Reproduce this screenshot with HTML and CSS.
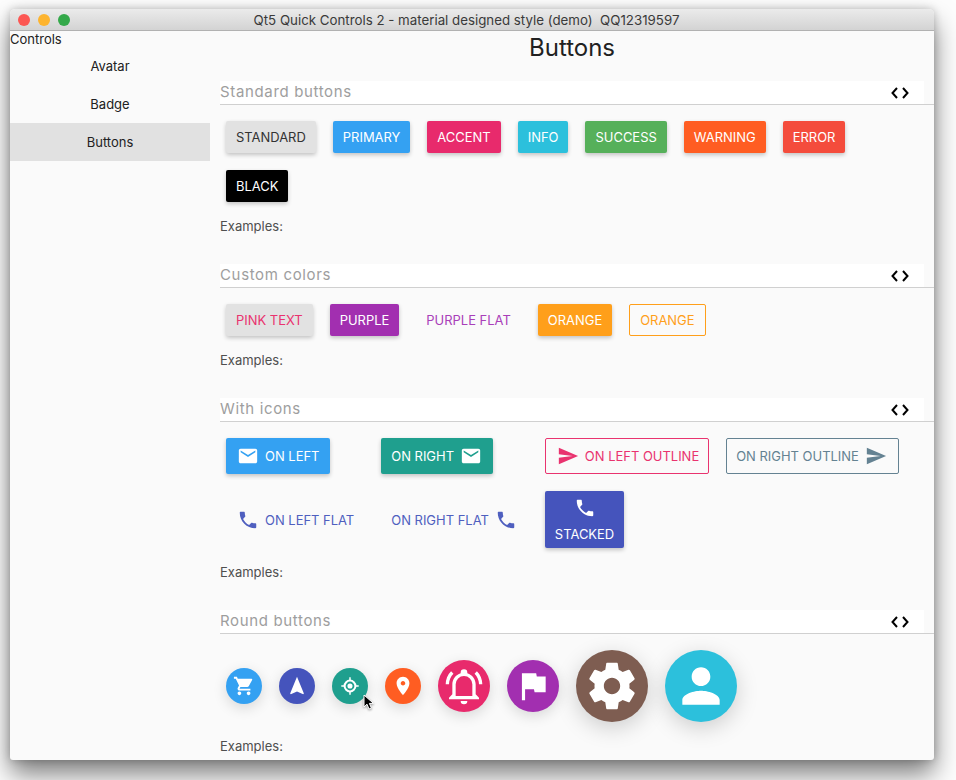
FILE: index.html
```html
<!DOCTYPE html>
<html lang="en">
<head>
    <meta charset="UTF-8">
    <meta name="viewport" content="width=device-width, initial-scale=1.0">
    <title>Qt5 Quick Controls 2 - material designed style (demo)</title>
    <link rel="stylesheet" href="styles.css">
</head>
<body>
    <svg class="icon-defs" width="0" height="0" aria-hidden="true">
        <symbol id="i-email" viewBox="0 0 24 24"><path d="M20 4H4c-1.1 0-1.99.9-1.99 2L2 18c0 1.1.9 2 2 2h16c1.1 0 2-.9 2-2V6c0-1.1-.9-2-2-2zm0 4l-8 5-8-5V6l8 5 8-5v2z"/></symbol>
        <symbol id="i-send" viewBox="0 0 24 24"><path d="M2.01 21L23 12 2.01 3 2 10l15 2-15 2z"/></symbol>
        <symbol id="i-phone" viewBox="0 0 24 24"><path d="M6.62 10.79c1.44 2.83 3.76 5.14 6.59 6.59l2.2-2.2c.27-.27.67-.36 1.02-.24 1.12.37 2.33.57 3.57.57.55 0 1 .45 1 1V20c0 .55-.45 1-1 1-9.39 0-17-7.61-17-17 0-.55.45-1 1-1h3.5c.55 0 1 .45 1 1 0 1.25.2 2.45.57 3.57.11.35.03.74-.25 1.02l-2.2 2.2z"/></symbol>
        <symbol id="i-cart" viewBox="0 0 24 24"><path d="M7 18c-1.1 0-1.99.9-1.99 2S5.9 22 7 22s2-.9 2-2-.9-2-2-2zM1 2v2h2l3.6 7.59-1.35 2.45c-.16.28-.25.61-.25.96 0 1.1.9 2 2 2h12v-2H7.42c-.14 0-.25-.11-.25-.25l.03-.12.9-1.63h7.45c.75 0 1.41-.41 1.75-1.03l3.58-6.49c.08-.14.12-.31.12-.48 0-.55-.45-1-1-1H5.21l-.94-2H1zm16 16c-1.1 0-1.99.9-1.99 2s.89 2 1.99 2 2-.9 2-2-.9-2-2-2z"/></symbol>
        <symbol id="i-navigation" viewBox="0 0 24 24"><path d="M12 2L4.5 20.29l.71.71L12 18l6.79 3 .71-.71z"/></symbol>
        <symbol id="i-location" viewBox="0 0 24 24"><path fill-rule="evenodd" d="M12 5a7 7 0 1 0 0 14 7 7 0 0 0 0-14zm0 2.200a4.800 4.800 0 1 1 0 9.600 4.800 4.800 0 0 1 0-9.600z"/><circle cx="12" cy="12" r="2.800"/><path d="M11.200 2.500h1.600v3h-1.600zM11.200 18.500h1.600v3h-1.600zM2.500 11.200h3v1.600h-3zM18.500 11.200h3v1.600h-3z"/></symbol>
        <symbol id="i-place" viewBox="0 0 24 24"><path d="M12 2C8.13 2 5 5.13 5 9c0 5.25 7 13 7 13s7-7.75 7-13c0-3.87-3.13-7-7-7zm0 9.5c-1.38 0-2.5-1.12-2.5-2.5s1.12-2.5 2.5-2.5 2.5 1.12 2.5 2.5-1.12 2.5-2.5 2.5z"/></symbol>
        <symbol id="i-bell" viewBox="0 0 24 24"><path d="M10,21H14A2,2 0 0,1 12,23A2,2 0 0,1 10,21M21,19V20H3V19L5,17V11C5,7.9 7.03,5.17 10,4.29C10,4.19 10,4.1 10,4A2,2 0 0,1 12,2A2,2 0 0,1 14,4C14,4.1 14,4.19 14,4.29C16.97,5.17 19,7.9 19,11V17L21,19M17,11A5,5 0 0,0 12,6A5,5 0 0,0 7,11V18H17V11M19.75,3.19L18.33,4.61C20.04,6.3 21,8.6 21,11H23C23,8.07 21.84,5.25 19.75,3.19M1,11H3C3,8.6 3.96,6.3 5.67,4.61L4.25,3.19C2.16,5.25 1,8.07 1,11Z"/></symbol>
        <symbol id="i-flag" viewBox="0 0 24 24"><path d="M14.4 6L14 4H5v17h2v-7h5.6l.4 2h7V6z"/></symbol>
        <symbol id="i-settings" viewBox="0 0 24 24"><path d="M19.43 12.98c.04-.32.07-.64.07-.98s-.03-.66-.07-.98l2.11-1.65c.19-.15.24-.42.12-.64l-2-3.46c-.12-.22-.39-.3-.61-.22l-2.49 1c-.52-.4-1.08-.73-1.69-.98l-.38-2.65C14.46 2.18 14.25 2 14 2h-4c-.25 0-.46.18-.49.42l-.38 2.65c-.61.25-1.17.59-1.69.98l-2.49-1c-.23-.09-.49 0-.61.22l-2 3.46c-.13.22-.07.49.12.64l2.11 1.65c-.04.32-.07.65-.07.98s.03.66.07.98l-2.11 1.65c-.19.15-.24.42-.12.64l2 3.46c.12.22.39.3.61.22l2.49-1c.52.4 1.08.73 1.69.98l.38 2.65c.03.24.24.42.49.42h4c.25 0 .46-.18.49-.42l.38-2.65c.61-.25 1.17-.59 1.69-.98l2.49 1c.23.09.49 0 .61-.22l2-3.46c.12-.22.07-.49-.12-.64l-2.11-1.65zM12 15.5c-1.93 0-3.5-1.57-3.5-3.5s1.57-3.5 3.5-3.5 3.5 1.57 3.5 3.5-1.57 3.5-3.5 3.5z"/></symbol>
        <symbol id="i-person" viewBox="0 0 24 24"><path d="M12 12c2.21 0 4-1.79 4-4s-1.79-4-4-4-4 1.79-4 4 1.79 4 4 4zm0 2c-2.67 0-8 1.34-8 4v2h16v-2c0-2.66-5.33-4-8-4z"/></symbol>
        <symbol id="i-code" viewBox="0 0 18 12"><path class="code-path" d="M6 1L1.500 6 6 11M12 1l4.500 5-4.500 5"/></symbol>
    </svg>

    <div class="window">
        <header class="titlebar">
            <div class="lights">
                <span class="light red"></span>
                <span class="light yellow"></span>
                <span class="light green"></span>
            </div>
            <div class="window-title">Qt5 Quick Controls 2 - material designed style (demo)&nbsp;&nbsp;QQ12319597</div>
        </header>

        <div class="body-row">
            <aside class="sidebar">
                <div class="sidebar-label">Controls</div>
                <a class="nav-item">Avatar</a>
                <a class="nav-item">Badge</a>
                <a class="nav-item active">Buttons</a>
            </aside>

            <main class="main">
                <h1>Buttons</h1>

                <section class="section">
                    <div class="section-head">
                        <div class="section-bar">
                            <h2>Standard buttons</h2>
                            <svg class="code-icon"><use href="#i-code"/></svg>
                        </div>
                    </div>
                    <div class="btn-row">
                        <button class="btn raised standard">STANDARD</button>
                        <button class="btn raised blue">PRIMARY</button>
                        <button class="btn raised pink">ACCENT</button>
                        <button class="btn raised cyan">INFO</button>
                        <button class="btn raised green">SUCCESS</button>
                        <button class="btn raised deep-orange">WARNING</button>
                        <button class="btn raised red">ERROR</button>
                        <button class="btn raised black">BLACK</button>
                    </div>
                    <p class="examples">Examples:</p>
                </section>

                <section class="section">
                    <div class="section-head">
                        <div class="section-bar">
                            <h2>Custom colors</h2>
                            <svg class="code-icon"><use href="#i-code"/></svg>
                        </div>
                    </div>
                    <div class="btn-row">
                        <button class="btn raised standard pink-text">PINK TEXT</button>
                        <button class="btn raised purple">PURPLE</button>
                        <button class="btn flat purple-text">PURPLE FLAT</button>
                        <button class="btn raised orange">ORANGE</button>
                        <button class="btn outline orange-text">ORANGE</button>
                    </div>
                    <p class="examples">Examples:</p>
                </section>

                <section class="section">
                    <div class="section-head">
                        <div class="section-bar">
                            <h2>With icons</h2>
                            <svg class="code-icon"><use href="#i-code"/></svg>
                        </div>
                    </div>
                    <div class="btn-grid">
                        <button class="btn tall raised blue"><svg class="btn-icon"><use href="#i-email"/></svg>ON LEFT</button>
                        <button class="btn tall icon-right raised teal">ON RIGHT<svg class="btn-icon"><use href="#i-email"/></svg></button>
                        <button class="btn tall icon-left outline pink-text"><svg class="btn-icon"><use href="#i-send"/></svg>ON LEFT OUTLINE</button>
                        <button class="btn tall icon-right outline slate-text">ON RIGHT OUTLINE<svg class="btn-icon"><use href="#i-send"/></svg></button>
                        <button class="btn tall icon-left flat indigo-text flat-row"><svg class="btn-icon"><use href="#i-phone"/></svg>ON LEFT FLAT</button>
                        <button class="btn tall icon-right flat indigo-text flat-row">ON RIGHT FLAT<svg class="btn-icon"><use href="#i-phone"/></svg></button>
                        <button class="btn stacked raised indigo"><svg class="btn-icon"><use href="#i-phone"/></svg>STACKED</button>
                    </div>
                    <p class="examples">Examples:</p>
                </section>

                <section class="section">
                    <div class="section-head">
                        <div class="section-bar">
                            <h2>Round buttons</h2>
                            <svg class="code-icon"><use href="#i-code"/></svg>
                        </div>
                    </div>
                    <div class="round-row">
                        <button class="round small blue"><svg><use href="#i-cart"/></svg></button>
                        <button class="round small indigo"><svg><use href="#i-navigation"/></svg></button>
                        <button class="round small teal"><svg><use href="#i-location"/></svg></button>
                        <button class="round small deep-orange"><svg><use href="#i-place"/></svg></button>
                        <button class="round medium pink"><svg><use href="#i-bell"/></svg></button>
                        <button class="round medium purple flag"><svg><use href="#i-flag"/></svg></button>
                        <button class="round large brown"><svg><use href="#i-settings"/></svg></button>
                        <button class="round large cyan"><svg><use href="#i-person"/></svg></button>
                    </div>
                    <p class="examples">Examples:</p>
                </section>
            </main>
        </div>

        <svg class="cursor" width="13" height="17" viewBox="0 0 13 17"><path d="M1 1v12l3-2.800L6 15l2.400-1-2-4.600H10.500z" fill="#000" stroke="#fff" stroke-width="1"/></svg>
    </div>
</body>
</html>
```

FILE: styles.css
```css
html, body {
    height: 100%;
}

body {
    margin: 0;
    height: 780px;
    overflow: hidden;
    padding: 9px 22px 0 10px;
    box-sizing: border-box;
    background-color: #fdfdfd;
    font-family: Inter, "Liberation Sans", sans-serif;
    color: #212121;
}

.icon-defs {
    position: absolute;
}

.code-path {
    fill: none;
    stroke: #000;
    stroke-width: 2;
}

.window {
    position: relative;
    height: 751px;
    border-radius: 5px 5px 3px 3px;
    background-color: #fafafa;
    box-shadow: 0 14px 26px rgba(0, 0, 0, 0.5), 0 0 8px rgba(0, 0, 0, 0.22);
    overflow: hidden;
}

/* title bar */
.titlebar {
    position: relative;
    height: 22px;
    box-sizing: border-box;
    display: flex;
    align-items: center;
    justify-content: center;
    padding-right: 11px;
    background: linear-gradient(#ebebeb, #d3d3d3);
    border-bottom: 1px solid #b1b1b1;
}

.lights {
    position: absolute;
    left: 8px;
    top: 5px;
    display: flex;
    gap: 8px;
}

.light {
    width: 12px;
    height: 12px;
    border-radius: 50%;
}

.light.red { background-color: #fc5753; }
.light.yellow { background-color: #fdb42f; }
.light.green { background-color: #34a94a; }

.window-title {
    font-size: 13.3px;
    color: #3a3a3a;
}

.body-row {
    display: flex;
    height: 729px;
}

/* sidebar */
.sidebar {
    width: 200px;
    flex-shrink: 0;
}

.sidebar-label {
    height: 16px;
    line-height: 16px;
    font-size: 13px;
}

.nav-item {
    display: block;
    height: 38px;
    line-height: 38px;
    text-align: center;
    font-size: 13px;
}

.nav-item.active {
    background-color: #e1e1e1;
}

/* main column */
.main {
    flex: 1;
    padding-left: 10px;
}

h1 {
    margin: 0 0 16px -10px;
    height: 34px;
    line-height: 34px;
    text-align: center;
    font-size: 24px;
    font-weight: 400;
}

.section {
    margin-bottom: 30px;
}

.section-head {
    border-bottom: 1px solid #d0d0d0;
}

.section-bar {
    display: flex;
    align-items: center;
    justify-content: space-between;
    height: 23px;
    margin-right: 10px;
    padding-right: 15px;
    background-color: #fff;
}

h2 {
    margin: 0 0 3px;
    font-size: 15px;
    font-weight: 400;
    letter-spacing: 0.65px;
    color: #9e9e9e;
}

.code-icon {
    width: 18px;
    height: 12px;
}

.examples {
    margin: 16px 0 0;
    height: 16px;
    line-height: 16px;
    font-size: 13px;
    color: #4f4f4f;
}

/* buttons */
.btn-row {
    display: flex;
    flex-wrap: wrap;
    gap: 17px;
    padding: 16px 20px 0 6px;
}

.btn-grid {
    display: grid;
    grid-template-columns: repeat(4, auto);
    justify-content: start;
    justify-items: start;
    align-items: start;
    gap: 17px;
    padding: 16px 0 0 6px;
}

.btn {
    height: 32px;
    padding: 0 10px;
    box-sizing: border-box;
    display: inline-flex;
    align-items: center;
    border: none;
    border-radius: 2px;
    background: none;
    font-family: Inter, sans-serif;
    font-size: 12.96px;
    color: #fff;
    white-space: nowrap;
}

.btn.raised {
    box-shadow: 0 2px 4px rgba(0, 0, 0, 0.22);
}

.btn.tall {
    height: 36px;
    padding: 0 11px;
    gap: 6px;
}

.btn.tall.icon-left { padding: 0 10px 0 11px; }
.btn.tall.icon-right { padding: 0 11px 0 10px; }
.btn.tall.outline.icon-left { padding: 0 9px 0 11px; }
.btn.tall.outline.icon-right { padding: 0 11px 0 9px; }

.flat-row {
    align-self: center;
}

.btn.stacked {
    height: 57px;
    padding: 6px 10px;
    flex-direction: column;
    justify-content: space-between;
}

.btn.outline {
    border: 1px solid currentColor;
}

.btn-icon {
    width: 22px;
    height: 22px;
    fill: currentColor;
    flex-shrink: 0;
}

.standard { background-color: #e2e2e2; color: #333; }
.blue { background-color: #34a1f2; }
.pink { background-color: #e82a6c; }
.cyan { background-color: #2cc0dc; }
.green { background-color: #56b05a; }
.deep-orange { background-color: #ff5d22; }
.red { background-color: #f44c3c; }
.black { background-color: #000; }
.purple { background-color: #a22fb0; }
.orange { background-color: #ff9f1a; }
.teal { background-color: #1f9f8e; }
.indigo { background-color: #4554bc; }
.brown { background-color: #7e5d51; }

.btn.pink-text { color: #e9336f; }
.btn.purple-text { color: #a93fb9; }
.btn.orange-text { color: #ff9f1a; }
.btn.slate-text { color: #648292; }
.btn.indigo-text { color: #4f5fbf; }

/* round buttons */
.round-row {
    display: flex;
    align-items: center;
    gap: 17px;
    padding: 16px 0 0 6px;
}

.round {
    padding: 0;
    border: none;
    border-radius: 50%;
    display: flex;
    align-items: center;
    justify-content: center;
    color: #fff;
    box-shadow: 0 4px 14px rgba(0, 0, 0, 0.14);
}

.round svg {
    fill: currentColor;
}

.round.small { width: 36px; height: 36px; }
.round.small svg { width: 22px; height: 22px; }
.round.medium { width: 52px; height: 52px; }
.round.medium svg { width: 40px; height: 40px; }
.round.medium.flag svg { width: 38px; height: 38px; }
.round.large { width: 72px; height: 72px; box-shadow: 0 6px 22px rgba(0, 0, 0, 0.18); }
.round.large svg { width: 56px; height: 56px; }

.cursor {
    position: absolute;
    left: 353px;
    top: 685px;
    filter: drop-shadow(0 1px 1px rgba(0, 0, 0, 0.4));
}
```
